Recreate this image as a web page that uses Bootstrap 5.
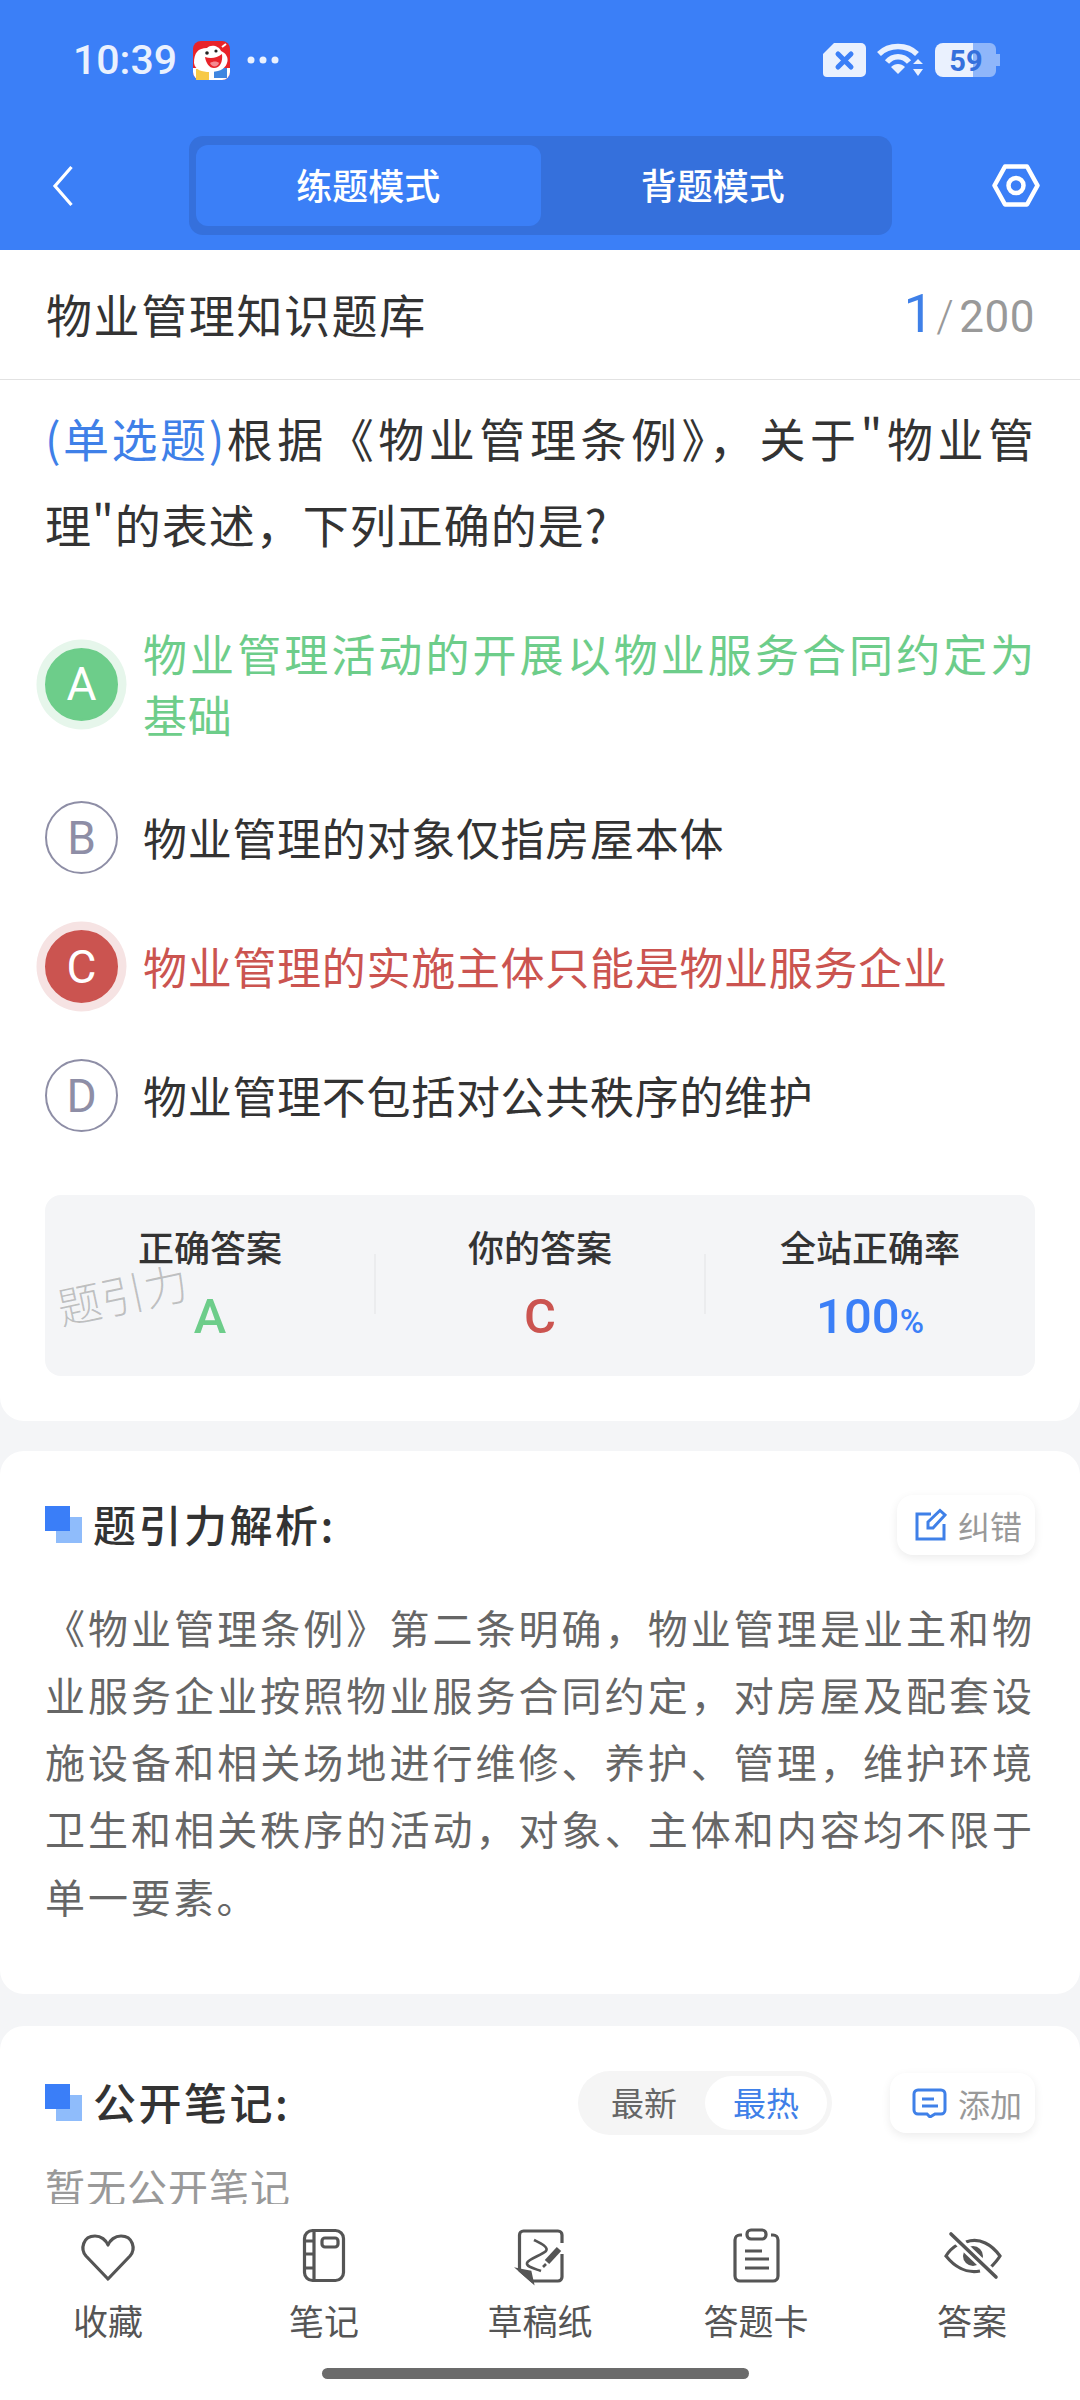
<!DOCTYPE html>
<html lang="zh-CN">
  <head>
    <meta charset="UTF-8" />
    <meta name="viewport" content="width=device-width, initial-scale=1.0" />
    <title>物业管理知识题库</title>
    <link
      href="https://cdn.jsdelivr.net/npm/bootstrap@5.3.3/dist/css/bootstrap.min.css"
      rel="stylesheet"
    />
    <style>
      html,
      body {
        height: 2400px;
      }
      body {
        background-color: #f4f5f7;
        color: #333;
        font-family: "Noto Sans CJK SC", "Noto Sans", sans-serif;
      }
      /* top blue area */
      .app-top {
        height: 250px;
        background-color: #3b7ff7;
        color: #fff;
      }
      .status-row {
        height: 120px;
        padding: 0 80px 0 73px;
      }
      .status-time {
        font: 500 41px/1 Roboto, sans-serif;
        color: #eaf1fe;
        margin-right: 16px;
      }
      .status-dots {
        margin-left: 17px;
      }
      .status-icons {
        gap: 11px;
      }
      .nav-row {
        margin-top: 16px;
        padding: 0 40px 0 52px;
      }
      .mode-switch {
        width: 703px;
        height: 99px;
        margin-left: 116px;
        padding: 9px 7px;
        background-color: #3570dc;
        border-radius: 14px;
        --bs-nav-pills-border-radius: 12px;
        --bs-nav-pills-link-active-bg: #3b7ff7;
        --bs-nav-pills-link-active-color: #fff;
      }
      .mode-switch .nav-link {
        height: 81px;
        padding: 0;
        color: #fff;
        font-size: 36px;
        font-weight: 500;
        line-height: 78px;
      }
      /* white blocks */
      .block-top {
        background-color: #fff;
        border-radius: 0 0 24px 24px;
        padding-bottom: 45px;
      }
      .bank-row {
        height: 130px;
        padding: 0 45px 2px 46px;
        border-bottom: 1.5px solid #e2e2e2;
      }
      .bank-name {
        font-size: 46px;
        letter-spacing: 1.6px;
      }
      .bank-count {
        font: 400 44px/1 Roboto, sans-serif;
        letter-spacing: 0.5px;
        color: #999;
      }
      .bank-count b {
        font-size: 54px;
        font-weight: 400;
        color: #3f80e8;
      }
      .bank-count i {
        margin: 0 5px 0 2px;
        font-style: normal;
        font-weight: 300;
      }
      .question-text {
        margin: 14px 45px 0;
        font-size: 46px;
        line-height: 86px;
        letter-spacing: 1px;
        text-align: justify;
      }
      .question-type {
        color: #3f80e8;
        letter-spacing: -1px;
      }
      .choice-list {
        margin: 57px 45px 0;
        gap: 56px;
      }
      .choice-mark {
        flex: 0 0 73px;
        width: 73px;
        height: 73px;
        border: 2px solid #8e8ea6;
        border-radius: 50%;
        color: #8e8ea6;
        font: 400 46px/1 Roboto, sans-serif;
      }
      .choice-text {
        font-size: 44px;
        line-height: 61px;
        letter-spacing: 0.7px;
        text-align: justify;
        margin-left: 25px;
      }
      .choice-right .choice-mark {
        background-color: #6dcd8a;
        border-color: #6dcd8a;
        color: #fff;
        box-shadow: 0 0 0 8.5px #e6f6eb;
      }
      .choice-right .choice-text {
        color: #6dcd8a;
      }
      .choice-wrong .choice-mark {
        background-color: #cb5450;
        border-color: #cb5450;
        color: #fff;
        box-shadow: 0 0 0 8.5px #f6e3e3;
      }
      .choice-wrong .choice-text {
        color: #cb5450;
      }
      .result-box {
        height: 181px;
        margin: 62.5px 45px 0;
        padding-top: 26px;
        background-color: #f4f5f7;
        border-radius: 16px;
      }
      .result-cell {
        position: relative;
      }
      .result-cell + .result-cell::before {
        content: "";
        position: absolute;
        left: -1px;
        top: 33px;
        width: 2px;
        height: 60px;
        background-color: #ebecee;
      }
      .result-label {
        font-size: 36px;
        font-weight: 500;
        line-height: 50px;
      }
      .result-value {
        margin-top: 18px;
        font: 500 49px/56px Roboto, sans-serif;
      }
      .result-value small {
        font-size: 33px;
      }
      .answer-right {
        color: #6dcd8a;
      }
      .answer-wrong {
        color: #cb5450;
      }
      .answer-rate {
        color: #3b7ff7;
      }
      .watermark {
        position: absolute;
        left: 11px;
        top: 76px;
        width: auto;
        padding: 0;
        font-size: 44px;
        font-weight: 300;
        line-height: 1;
        color: rgba(0, 0, 0, 0.22);
        transform: rotate(-12deg);
      }
      .block-mid {
        margin-top: 30px;
        padding: 44px 45px 64px;
        background-color: #fff;
        border-radius: 24px;
      }
      .block-notes {
        margin-top: 32px;
        padding: 45px 45px 0;
        background-color: #fff;
        border-radius: 24px 24px 0 0;
      }
      .head-title {
        padding-bottom: 4px;
        margin-left: 11px;
        font-size: 43px;
        font-weight: 500;
        line-height: 50px;
        letter-spacing: 2.5px;
      }
      .chip-btn {
        height: 60px;
        padding: 0 13px 0 18px;
        gap: 11px;
        background-color: #fff;
        border: 0;
        border-radius: 16px;
        box-shadow: 0 3px 10px rgba(0, 0, 0, 0.08);
        color: #999;
        font-size: 32px;
      }
      .chip-add {
        padding-left: 22px;
      }
      .explain-text {
        margin: 39px 0 0;
        font-size: 40px;
        line-height: 67.3px;
        letter-spacing: 2.9px;
        color: #666;
        text-align: justify;
      }
      .sort-pill {
        width: 254px;
        height: 64px;
        padding: 5px;
        margin-right: 58px;
        background-color: #f5f5f5;
        border-radius: 32px;
        font-size: 33px;
        color: #666;
      }
      .sort-pill span {
        flex: 1;
        line-height: 52px;
        text-align: center;
      }
      .sort-pill .sort-on {
        background-color: #fff;
        border-radius: 27px;
        color: #3f80e8;
      }
      .empty-note {
        margin-top: 24px;
        font-size: 40px;
        line-height: 54px;
        letter-spacing: 1px;
        color: #999;
      }
      /* bottom tool bar */
      .tool-bar {
        height: 196px;
        padding-top: 22px;
        background-color: #fff;
      }
      .tool-item {
        width: 216px;
        color: #555;
        font-size: 35px;
        line-height: 44px;
      }
      .tool-item svg {
        display: block;
        margin: 0 auto 12px;
      }
      .home-bar {
        width: 427px;
        height: 11px;
        margin: 26px auto 0 322px;
        background-color: #6b6b6b;
        border-radius: 6px;
      }
    </style>
  </head>
  <body class="d-flex flex-column overflow-hidden">
    <!-- Header -->
    <header class="app-top flex-shrink-0">
      <div class="status-row d-flex align-items-center">
        <span class="status-time">10:39</span>
        <svg width="37" height="39" viewBox="0 0 37 39">
          <rect width="37" height="39" rx="8" fill="#e8232a" />
          <path d="M0 27 H37 V31 a8 8 0 0 1 -8 8 H8 a8 8 0 0 1 -8 -8 Z" fill="#fff" />
          <rect x="3" y="28" width="13" height="11" fill="#f7c948" />
          <rect x="21" y="27" width="13" height="10" fill="#3f86e0" />
          <path d="M1 22 C1 12 5 7 14 7 C18 3 26 5 28 10 C33 12 36 17 34 22 C32 29 24 31 17 31 C9 31 2 29 1 22 Z" fill="#fff" />
          <path d="M12 16 C18 18 24 17 29 13 C30 21 27 27 21 27 C16 27 13 22 12 16 Z" fill="#e8232a" />
          <path d="M17 22 C20 20 24 20 26 22 C25 26 19 27 17 22 Z" fill="#f58a90" />
          <circle cx="14" cy="12" r="1.8" fill="#222" />
          <circle cx="23" cy="10" r="1.6" fill="#222" />
          <path d="M29 6 L33 3" stroke="#fff" stroke-width="2" />
        </svg>
        <svg class="status-dots" width="32" height="8" viewBox="0 0 32 8" fill="#eaf1fe">
          <circle cx="4" cy="4" r="3.5" />
          <circle cx="16" cy="4" r="3.5" />
          <circle cx="28" cy="4" r="3.5" />
        </svg>
        <div class="status-icons d-flex align-items-center ms-auto">
          <svg width="43" height="34" viewBox="0 0 43 34">
            <path d="M11 0 H38 a5 5 0 0 1 5 5 V29 a5 5 0 0 1 -5 5 H4 a4 4 0 0 1 -4 -4 V11 Z" fill="#eaf1fe" />
            <path d="M15 11 L28 24 M28 11 L15 24" stroke="#3b7ff7" stroke-width="5" stroke-linecap="round" />
          </svg>
          <svg width="47" height="34" viewBox="0 0 47 34" fill="none" stroke="#eaf1fe" stroke-width="5.5">
            <path d="M2 11 C12 1 30 1 40 11" />
            <path d="M10 19 C16 12 26 12 32 19" />
            <path d="M14 24 L21 31 L28 24 C24 20 18 20 14 24 Z" fill="#eaf1fe" stroke="none" />
            <path d="M36 21 L41 16 L46 21 Z M36 26 L41 33 L46 26 Z" fill="#eaf1fe" stroke="none" />
          </svg>
          <svg width="65" height="34" viewBox="0 0 65 34">
            <path d="M38 0 H55 a6 6 0 0 1 6 6 V11 h4 V23 h-4 V28 a6 6 0 0 1 -6 6 H38 Z" fill="#8fb6fa" />
            <path d="M8 0 H38 V34 H8 a8 8 0 0 1 -8 -8 V8 a8 8 0 0 1 8 -8 Z" fill="#eaf1fe" />
            <text x="31" y="27.5" text-anchor="middle" font-family="Roboto, sans-serif" font-weight="700" font-size="29" fill="#3570dc">59</text>
          </svg>
        </div>
      </div>
      <div class="nav-row d-flex align-items-center">
        <svg width="21" height="42" viewBox="0 0 21 42" fill="none" stroke="#fff" stroke-width="3.2">
          <path d="M19.5 2 L3 21 L19.5 40" />
        </svg>
        <ul class="mode-switch nav nav-pills nav-fill">
          <li class="nav-item"><a class="nav-link active" href="#">练题模式</a></li>
          <li class="nav-item"><a class="nav-link" href="#">背题模式</a></li>
        </ul>
        <svg class="ms-auto" width="48" height="43" viewBox="0 0 48 43" fill="none" stroke="#fff" stroke-width="4.5">
          <path d="M2.5 21.5 L13 2.5 H35 L45.5 21.5 L35 40.5 H13 Z" stroke-linejoin="round" />
          <circle cx="24" cy="21.5" r="7.5" />
        </svg>
      </div>
    </header>

    <!-- Scroll area -->
    <main class="flex-grow-1 overflow-hidden">
      <section class="block-top">
        <div class="bank-row d-flex align-items-center justify-content-between">
          <span class="bank-name">物业管理知识题库</span>
          <span class="bank-count"><b>1</b><i>/</i>200</span>
        </div>
        <div class="question-text">
          <span class="question-type">(单选题)</span>根据《物业管理条例》，关于"物业管理"的表述，下列正确的是?
        </div>
        <div class="choice-list d-flex flex-column">
          <div class="choice-right d-flex align-items-center">
            <span class="choice-mark d-flex align-items-center justify-content-center">A</span>
            <span class="choice-text">物业管理活动的开展以物业服务合同约定为基础</span>
          </div>
          <div class="d-flex align-items-center">
            <span class="choice-mark d-flex align-items-center justify-content-center">B</span>
            <span class="choice-text">物业管理的对象仅指房屋本体</span>
          </div>
          <div class="choice-wrong d-flex align-items-center">
            <span class="choice-mark d-flex align-items-center justify-content-center">C</span>
            <span class="choice-text">物业管理的实施主体只能是物业服务企业</span>
          </div>
          <div class="d-flex align-items-center">
            <span class="choice-mark d-flex align-items-center justify-content-center">D</span>
            <span class="choice-text">物业管理不包括对公共秩序的维护</span>
          </div>
        </div>
        <div class="result-box row g-0 text-center position-relative">
          <div class="result-cell col-4">
            <div class="result-label">正确答案</div>
            <div class="result-value answer-right">A</div>
          </div>
          <div class="result-cell col-4">
            <div class="result-label">你的答案</div>
            <div class="result-value answer-wrong">C</div>
          </div>
          <div class="result-cell col-4">
            <div class="result-label">全站正确率</div>
            <div class="result-value answer-rate">100<small>%</small></div>
          </div>
          <span class="watermark">题引力</span>
        </div>
      </section>

      <section class="block-mid">
        <div class="d-flex align-items-center">
          <svg width="37" height="37" viewBox="0 0 37 37">
            <rect x="11" y="11" width="26" height="26" fill="#8fbcfb" />
            <rect width="25" height="25" fill="#3a7ef8" />
          </svg>
          <span class="head-title">题引力解析:</span>
          <button class="chip-btn btn d-flex align-items-center ms-auto" type="button">
            <svg width="32" height="33" viewBox="0 0 32 33" fill="none" stroke="#3f80e8" stroke-width="3">
              <path d="M16 6 H2 V31 H29 V16" />
              <path d="M13 14 L25 2.5 L30 7 L18 20 H13 Z" />
            </svg>
            纠错
          </button>
        </div>
        <p class="explain-text">《物业管理条例》第二条明确，物业管理是业主和物业服务企业按照物业服务合同约定，对房屋及配套设施设备和相关场地进行维修、养护、管理，维护环境卫生和相关秩序的活动，对象、主体和内容均不限于单一要素。</p>
      </section>

      <section class="block-notes">
        <div class="d-flex align-items-center">
          <svg width="37" height="37" viewBox="0 0 37 37">
            <rect x="11" y="11" width="26" height="26" fill="#8fbcfb" />
            <rect width="25" height="25" fill="#3a7ef8" />
          </svg>
          <span class="head-title">公开笔记:</span>
          <div class="sort-pill d-flex ms-auto">
            <span>最新</span>
            <span class="sort-on">最热</span>
          </div>
          <button class="chip-btn chip-add btn d-flex align-items-center" type="button">
            <svg width="35" height="30" viewBox="0 0 35 30" fill="none" stroke="#3f80e8" stroke-width="3">
              <path d="M6 2 H29 a4 4 0 0 1 4 4 V22 a4 4 0 0 1 -4 4 H23 L18 29 L15 26 H6 a4 4 0 0 1 -4 -4 V6 a4 4 0 0 1 4 -4 Z" />
              <path d="M10 11 H22 M10 18 H26" />
            </svg>
            添加
          </button>
        </div>
        <div class="empty-note">暂无公开笔记</div>
      </section>
    </main>

    <!-- Bottom tools -->
    <footer class="tool-bar flex-shrink-0">
      <div class="d-flex text-center">
        <div class="tool-item">
          <svg width="60" height="60" viewBox="0 0 60 60" fill="none" stroke="#555" stroke-width="3.2" stroke-linejoin="round">
            <path d="M30 53 L8 30 C2 23 5 10 17 10 C23 10 28 14 30 19 C32 14 37 10 43 10 C55 10 58 23 52 30 Z" />
          </svg>
          收藏
        </div>
        <div class="tool-item">
          <svg width="60" height="60" viewBox="0 0 60 60" fill="none" stroke="#555" stroke-width="3.2">
            <rect x="10.5" y="4.5" width="39" height="50" rx="8" />
            <path d="M20 4.5 V54.5 M10.5 15 H20 M10.5 28 H20 M10.5 42 H20" />
            <rect x="28" y="12" width="16" height="9" rx="3" />
          </svg>
          笔记
        </div>
        <div class="tool-item">
          <svg width="60" height="60" viewBox="0 0 60 60" fill="none" stroke="#555" stroke-width="3.2">
            <path d="M9.5 44 V9 a4 4 0 0 1 4 -4 H48 a4 4 0 0 1 4 4 V17 M52 28 V51 a4 4 0 0 1 -4 4 H22 L9.5 44" />
            <path d="M9.5 44 L20 46 L22 55 Z" fill="#555" />
            <path d="M24 14 C30 17 39 21 36 25 C32 29 18 33 17 37 C16 41 26 43 31 45" stroke-width="2.6" />
            <path d="M49 23 L37 36" stroke-width="6" />
            <path d="M36 38 L33 41" stroke-width="2.6" />
          </svg>
          草稿纸
        </div>
        <div class="tool-item">
          <svg width="60" height="60" viewBox="0 0 60 60" fill="none" stroke="#555" stroke-width="3.2">
            <path d="M16 9 H14 a5 5 0 0 0 -5 5 V50 a5 5 0 0 0 5 5 H47 a5 5 0 0 0 5 -5 V14 a5 5 0 0 0 -5 -5 H45" />
            <rect x="21" y="4" width="19" height="9" rx="4" />
            <path d="M19 25 H36 M19 33 H43 M19 42 H43" />
          </svg>
          答题卡
        </div>
        <div class="tool-item">
          <svg width="60" height="60" viewBox="0 0 60 60" fill="none" stroke="#555" stroke-width="3.2">
            <path d="M24 16 C38 11 50 19 58 30 C55 35 52 38 48 42" />
            <path d="M38 45 C24 48 12 40 4 30 C7 25 10 22 15 19" />
            <circle cx="31" cy="30" r="10" fill="#555" stroke="none" />
            <path d="M9 8 L54 51" stroke="#fff" stroke-width="9" />
            <path d="M9 8 L54 51" stroke-linecap="round" stroke-width="3.6" />
          </svg>
          答案
        </div>
      </div>
      <div class="home-bar"></div>
    </footer>
  </body>
</html>
